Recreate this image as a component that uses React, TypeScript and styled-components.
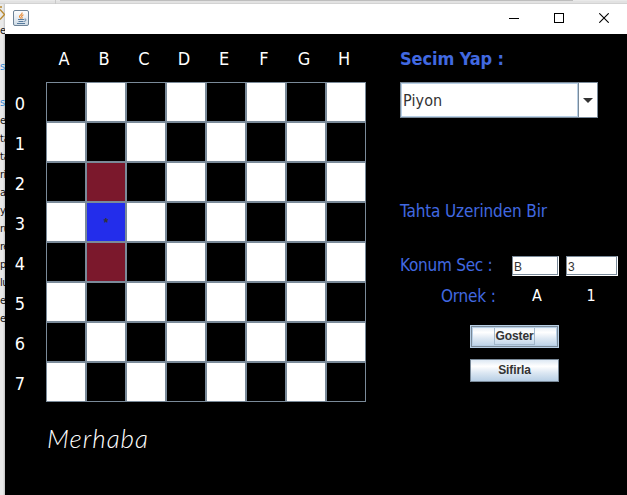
import React from "react";
import styled, { createGlobalStyle } from "styled-components";

const GlobalStyle = createGlobalStyle`
  * { box-sizing: border-box; }
  body { margin: 0; overflow: hidden; background: #e6e6e6; }
`;

const tahoma = `"DejaVu Sans Condensed", "DejaVu Sans", sans-serif`;

const Desktop = styled.div`
  width: 627px;
  height: 495px;
  display: grid;
  grid-template-columns: 5px 622px;
  grid-template-rows: 4px 491px;
  background: #e4e4e4;
  overflow: hidden;
`;

const TopStrip = styled.div`
  grid-column: 1 / 3;
  display: flex;
  background: linear-gradient(#e9e9e9 0 1px, #e2e2e2 1px 3px, #d3d3d3 3px);
`;

const TabEdge = styled.div<{ $left: number; $width: number; $dark?: boolean }>`
  margin-left: ${(p) => p.$left}px;
  width: ${(p) => p.$width}px;
  height: ${(p) => (p.$dark ? 1 : 4)}px;
  background: ${(p) => (p.$dark ? "#bdbdbd" : "#c9c9c9")};
`;

const Behind = styled.div`
  height: 491px;
  overflow: hidden;
  background: linear-gradient(90deg, #e9e9e9 0 3px, #d6d6d6 4px, #c2c2c2);
  display: flex;
  flex-direction: column;
`;

const Diamond = styled.svg`
  display: block;
  width: 5px;
  height: 21px;
  flex: none;
`;

const Snippet = styled.div<{ $h: number; $link?: boolean }>`
  height: ${(p) => p.$h}px;
  flex: none;
  display: flex;
  align-items: flex-end;
  white-space: nowrap;
  font: 11px/18px ${tahoma};
  letter-spacing: -0.5px;
  color: ${(p) => (p.$link ? "#3a8bd8" : "#111")};
`;

const Window = styled.main`
  display: flex;
  flex-direction: column;
  background: #000;
  overflow: hidden;
`;

const TitleBar = styled.header`
  height: 30px;
  flex: none;
  background: #fff;
  display: flex;
  justify-content: space-between;
  padding: 0 0 0 8px;
`;

const JavaIcon = styled.svg`
  width: 16px;
  height: 16px;
  margin-top: 6px;
`;

const Controls = styled.div`
  display: flex;
  padding: 9px 18px 0 0;
  gap: 35px;
`;

const Control = styled.svg`
  width: 10px;
  height: 10px;
  fill: none;
  stroke: #000;
`;

const Content = styled.div`
  display: flex;
  flex: 1;
`;

const BoardArea = styled.section`
  width: 395px;
  display: grid;
  grid-template-columns: 41px 320px;
  grid-template-rows: 48px 320px 1fr;
`;

const Files = styled.div`
  grid-column: 2;
  display: grid;
  grid-template-columns: repeat(8, 40px);
  padding-top: 14px;
  margin-left: -2px;
`;

const Ranks = styled.div`
  display: grid;
  grid-template-rows: repeat(8, 40px);
  padding-top: 11px;
  margin-right: 11px;
`;

const Coordinate = styled.span`
  font: 18px/22px ${tahoma};
  color: #fff;
  text-align: center;
`;

const Board = styled.div`
  display: grid;
  grid-template: repeat(8, 40px) / repeat(8, 40px);
`;

const Square = styled.div<{ $fill: string }>`
  border: 1px solid #7a8a99;
  background: ${(p) => p.$fill};
  color: #333;
  font: bold 12px/40px "Liberation Sans", sans-serif;
  text-align: center;
`;

const Greeting = styled.div`
  grid-column: 2;
  padding: 20px 0 0 1px;
  font: italic 300 26px/32px Lato, sans-serif;
  letter-spacing: 1px;
  color: #fff;
`;

const Panel = styled.section`
  width: 227px;
  padding-top: 14px;
  display: flex;
  flex-direction: column;
`;

const Label = styled.div<{ $bold?: boolean; $spacing?: number }>`
  font: ${(p) => (p.$bold ? "bold 18px" : "17px")}/22px ${tahoma};
  letter-spacing: ${(p) => p.$spacing ?? 0}px;
  color: #4169e1;
  white-space: nowrap;
`;

const Combo = styled.div`
  width: 198px;
  height: 36px;
  margin: 12px 0 82px;
  border: 1px solid #7a8a99;
  background: #fff;
  display: flex;
`;

const ComboValue = styled.div`
  width: 177px;
  border: 1px solid #b8cfe5;
  padding-left: 1px;
  font: 16px/33px ${tahoma};
  letter-spacing: 0.1px;
  color: #333;
`;

const ComboArrow = styled.div`
  flex: 1;
  border-left: 1px solid #7a8a99;
  display: flex;
  align-items: center;
  justify-content: center;
`;

const PositionRow = styled.div`
  margin-top: 32px;
  height: 24px;
  display: grid;
  grid-template-columns: 112px 47px 59px;
`;

const Field = styled.div<{ $gap?: number }>`
  margin: 2px 0 0 ${(p) => p.$gap ?? 0}px;
  width: ${(p) => (p.$gap ? 52 : 47)}px;
  height: 20px;
  border: 1px solid #7a8a99;
  border-right-color: #fff;
  border-bottom-color: #fff;
  box-shadow: inset -1px -1px #7a8a99, inset 1px 1px #fff;
  background: #fff;
  padding-left: 1px;
  font: 12px/20px "Liberation Sans", sans-serif;
  color: #333;
`;

const ExampleRow = styled.div`
  margin-top: 7px;
  padding-left: 41px;
  height: 22px;
  display: grid;
  grid-template-columns: 69px 54px 54px;
`;

const Example = styled.span`
  font: 16px/22px ${tahoma};
  color: #fff;
  text-align: center;
`;

const Actions = styled.div`
  padding: 18px 0 0 70px;
  display: flex;
  flex-direction: column;
  gap: 11px;
`;

const Button = styled.button<{ $focused?: boolean }>`
  width: 89px;
  height: 23px;
  padding: 0;
  border: 1px solid ${(p) => (p.$focused ? "#b8cfe5" : "#7a8a99")};
  border-radius: 0;
  box-shadow: ${(p) => (p.$focused ? "inset 0 0 0 1px #7a8a99, inset 0 0 0 2px #b8cfe5" : "none")};
  background: linear-gradient(#dde8f3 0%, #fff 30%, #dde8f3 60%, #b8cfe5 100%);
  display: flex;
  justify-content: center;
  align-items: center;
  font: bold 12px/17px "Liberation Sans", sans-serif;
  color: #333;
`;

const Caption = styled.span<{ $focused?: boolean }>`
  height: 17px;
  border: ${(p) => (p.$focused ? "1px solid #a3b8cc" : "0")};
  border-top: 0;
  letter-spacing: -0.1px;
`;

const size = [0, 1, 2, 3, 4, 5, 6, 7];

const squareFill = (row: number, col: number) => {
  if (col === 1 && row === 3) return "#232deb";
  if (col === 1 && (row === 2 || row === 4)) return "#7b182c";
  return (row + col) % 2 ? "#fff" : "#000";
};

const snippets: { text: string; h: number; link?: boolean }[] = [
  { text: "es", h: 15 },
  { text: "s", h: 36, link: true },
  { text: "s", h: 36, link: true },
  { text: "e", h: 18 },
  { text: "ta", h: 18 },
  { text: "ta", h: 18 },
  { text: "ri", h: 18 },
  { text: "ai", h: 18 },
  { text: "yS", h: 18 },
  { text: "ru", h: 18 },
  { text: "re", h: 18 },
  { text: "p", h: 18 },
  { text: "lu", h: 18 },
  { text: "er", h: 18 },
  { text: "e", h: 18 },
];

export default function App() {
  return (
    <>
      <GlobalStyle />
      <Desktop>
        <TopStrip>
          <TabEdge $left={55} $width={1} />
          <TabEdge $left={4} $width={513} $dark />
        </TopStrip>
        <Behind>
          <Diamond viewBox="0 0 5 21" fill="none" stroke="#b8892f" strokeWidth="1.3">
            <path d="M0 5.5 L4.5 10.5 L0 15.5 M0 3h2" />
          </Diamond>
          {snippets.map((s, i) => (
            <Snippet key={i} $h={s.h} $link={s.link}>
              {s.text}
            </Snippet>
          ))}
        </Behind>
        <Window>
          <TitleBar>
            <JavaIcon viewBox="0 0 16 16" fill="none">
              <defs>
                <linearGradient id="tile" x2="0" y2="1">
                  <stop stopColor="#fff" />
                  <stop offset="1" stopColor="#cfdbe6" />
                </linearGradient>
              </defs>
              <rect x=".5" y=".5" width="15" height="15" rx="1.5" fill="url(#tile)" stroke="#6e8397" />
              <path d="M9 2.5C10 4.5 6 5 6.5 6.7c.2.8 1 1 1.2 1.8M10.5 4.7C8.3 5.6 8.3 6.3 9 7.2c.4.6 0 1-.5 1.3" stroke="#e8872d" strokeWidth="1.1" />
              <path d="M5 9.5h6M5.5 11.5h5M4 13.5h8M11.5 9.2c2.3-.5 2 1.8-.3 2.2" stroke="#587b9d" />
            </JavaIcon>
            <Controls>
              <Control viewBox="0 0 10 10"><path d="M0 5.5h10" /></Control>
              <Control viewBox="0 0 10 10"><rect x=".5" y=".5" width="9" height="9" /></Control>
              <Control viewBox="0 0 10 10"><path d="M.3.3l9.4 9.4M9.7.3L.3 9.7" strokeWidth="1.1" /></Control>
            </Controls>
          </TitleBar>
          <Content>
            <BoardArea>
              <Files>
                {"ABCDEFGH".split("").map((c) => <Coordinate key={c}>{c}</Coordinate>)}
              </Files>
              <Ranks>
                {size.map((n) => <Coordinate key={n}>{n}</Coordinate>)}
              </Ranks>
              <Board>
                {size.map((r) => size.map((c) => (
                  <Square key={`${r}${c}`} $fill={squareFill(r, c)}>
                    {r === 3 && c === 1 ? "*" : ""}
                  </Square>
                )))}
              </Board>
              <Greeting>Merhaba</Greeting>
            </BoardArea>
            <Panel>
              <Label $bold $spacing={-0.1}>Secim Yap :</Label>
              <Combo>
                <ComboValue>Piyon</ComboValue>
                <ComboArrow>
                  <svg width="10" height="5" viewBox="0 0 10 5"><path d="M0 0h10L5 5z" fill="#333" /></svg>
                </ComboArrow>
              </Combo>
              <Label $spacing={-0.13}>Tahta Uzerinden Bir</Label>
              <PositionRow>
                <Label $spacing={-0.25}>Konum Sec :</Label>
                <Field>B</Field>
                <Field $gap={7}>3</Field>
              </PositionRow>
              <ExampleRow>
                <Label $spacing={-0.2}>Ornek :</Label>
                <Example>A</Example>
                <Example>1</Example>
              </ExampleRow>
              <Actions>
                <Button $focused><Caption $focused>Goster</Caption></Button>
                <Button><Caption>Sifirla</Caption></Button>
              </Actions>
            </Panel>
          </Content>
        </Window>
      </Desktop>
    </>
  );
}
